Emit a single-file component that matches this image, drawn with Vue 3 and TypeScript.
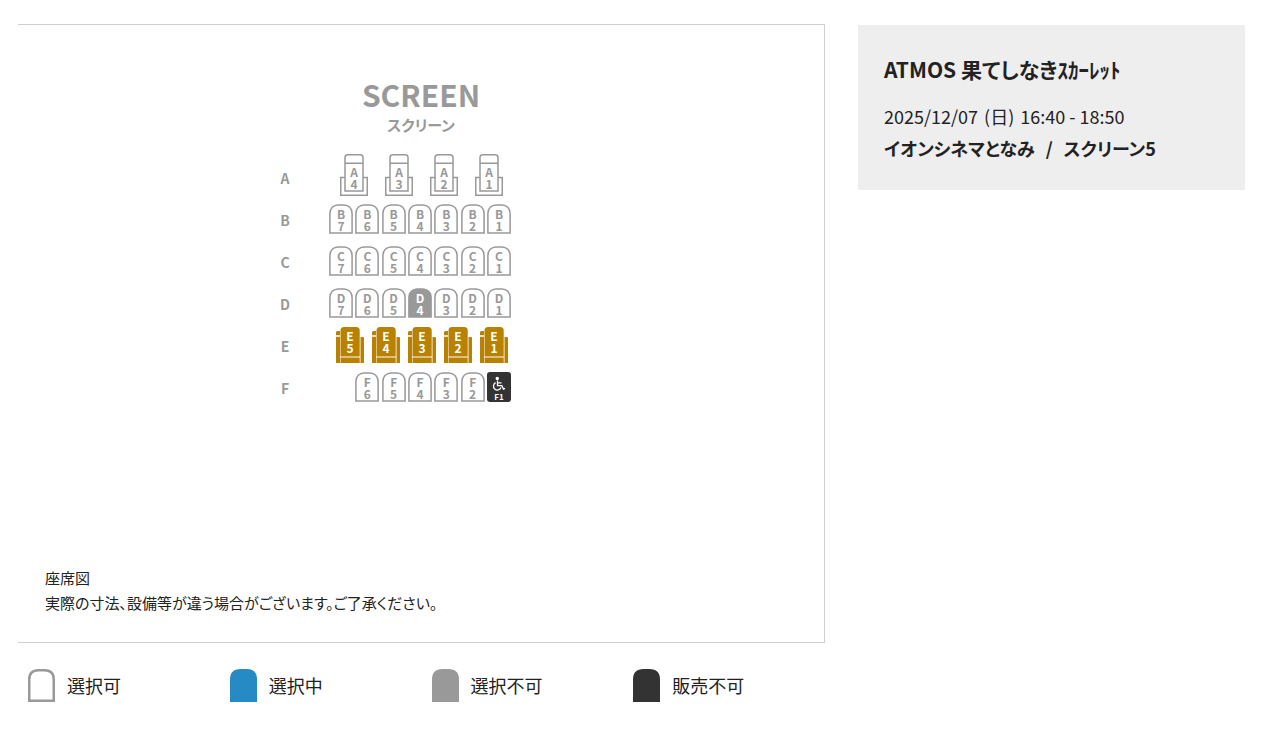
<script setup lang="ts">
type SeatKind = 'standard' | 'wide' | 'premium' | 'wheelchair' | 'gap'
type SeatState = 'available' | 'selected' | 'taken' | 'unsold'

interface Seat {
  row: string
  number: number
  kind: SeatKind
  state: SeatState
}

interface SeatRow {
  name: string
  layout: 'standard' | 'wide' | 'premium'
  seats: Seat[]
}

function makeRow(
  name: string,
  count: number,
  layout: SeatRow['layout'],
  overrides: Record<number, Partial<Seat>> = {},
): SeatRow {
  const seats: Seat[] = []
  for (let number = count; number >= 1; number--) {
    seats.push({ row: name, number, kind: layout, state: 'available', ...overrides[number] })
  }
  return { name, layout, seats }
}

const rows: SeatRow[] = [
  makeRow('A', 4, 'wide'),
  makeRow('B', 7, 'standard'),
  makeRow('C', 7, 'standard'),
  makeRow('D', 7, 'standard', { 4: { state: 'taken' } }),
  makeRow('E', 5, 'premium'),
  makeRow('F', 7, 'standard', {
    7: { kind: 'gap' },
    1: { kind: 'wheelchair', state: 'unsold' },
  }),
]

const legend: { state: SeatState; label: string }[] = [
  { state: 'available', label: '選択可' },
  { state: 'selected', label: '選択中' },
  { state: 'taken', label: '選択不可' },
  { state: 'unsold', label: '販売不可' },
]
</script>

<template>
  <main class="page">
    <div class="main">
      <section class="panel">
        <h1 class="screen">SCREEN</h1>
        <p class="screen-sub">スクリーン</p>

        <div class="map">
          <div v-for="row in rows" :key="row.name" class="row" :class="'row-' + row.layout">
            <span class="row-name">{{ row.name }}</span>
            <div class="seats">
              <template v-for="seat in row.seats" :key="seat.number">
                <span v-if="seat.kind === 'gap'" class="seat"></span>
                <button
                  v-else
                  type="button"
                  class="seat"
                  :class="[seat.kind, seat.state]"
                  :disabled="seat.state === 'taken' || seat.state === 'unsold'"
                >
                  <svg v-if="seat.kind === 'standard'" class="shape" viewBox="0 0 24 30" aria-hidden="true">
                    <path class="body" d="M.9 29.1V9.5C.9 4.5 4.5.9 9 .9h6c4.500 0 8.100 3.600 8.100 8.600v19.600z" />
                  </svg>
                  <svg v-else-if="seat.kind === 'wide'" class="shape" viewBox="0 0 28 42" aria-hidden="true">
                    <path class="body" d="M5 23.500H.75v17.750h26.500V23.500H23" />
                    <path class="body" d="M5 37V3.500Q5 .75 8 .75h12Q23 .75 23 3.500V37zM5 9.300h18" />
                  </svg>
                  <svg v-else-if="seat.kind === 'premium'" class="shape" viewBox="0 0 28 36" aria-hidden="true">
                    <path class="fill" d="M0 8.200V5.500Q0 4 1.500 4H4v4.200zM0 9.700h4V36H0zM24.500 10H27q1 0 1 1v25h-3.500z" />
                    <path class="fill" d="M4.500 29.500V3.500Q4.500 0 8 0h12.200q3.500 0 3.500 3.500v26zM4.500 30.500h19.200V36H4.500z" />
                  </svg>
                  <svg v-else class="shape" viewBox="0 0 24 30" aria-hidden="true">
                    <rect width="24" height="30" rx="3" fill="#333" />
                    <circle cx="10.300" cy="6.500" r="1.700" fill="#fff" />
                    <path
                      d="M10.500 8.500v5.100h4.300l1.700 3.500 1.500-.7M10.500 10.800h4M8.600 10.700a3.900 3.900 0 1 0 5.400 4.900"
                      fill="none"
                      stroke="#fff"
                      stroke-width="1.300"
                    />
                  </svg>
                  <span v-if="seat.kind === 'wheelchair'" class="tag">{{ seat.row }}{{ seat.number }}</span>
                  <span v-else class="code">{{ seat.row }}<br />{{ seat.number }}</span>
                </button>
              </template>
            </div>
          </div>
        </div>

        <p class="note">座席図<br />実際の寸法、設備等が違う場合がございます。ご了承ください。</p>
      </section>

      <ul class="legend">
        <li v-for="item in legend" :key="item.state" class="legend-item">
          <svg class="legend-icon" :class="item.state" viewBox="0 0 27 33" aria-hidden="true">
            <path class="body" d="M1.250 31.750V10.500q0-9.250 9.250-9.250h6q9.250 0 9.250 9.250v21.250z" />
          </svg>
          <span>{{ item.label }}</span>
        </li>
      </ul>
    </div>

    <aside class="info">
      <h2 class="title">ATMOS 果てしなきｽｶｰﾚｯﾄ</h2>
      <p class="date"><span>2025/12/07</span><span>(日)</span><span>16:40 - 18:50</span></p>
      <p class="place"><span>イオンシネマとなみ</span><span>/</span><span>スクリーン5</span></p>
    </aside>
  </main>
</template>

<style>
body {
  background: #fff;
}
</style>

<style scoped>
.page {
  display: grid;
  grid-template-columns: minmax(0, 807fr) minmax(0, 387fr);
  column-gap: 33px;
  align-items: start;
  padding: 24px 35px 24px 18px;
  color: #222;
  font-family: "Noto Sans CJK JP", sans-serif;
  font-feature-settings: "palt";
}

h1,
h2,
p,
ul {
  margin: 0;
  padding: 0;
}

.panel {
  border: 1px solid #d0d0d0;
  border-left: 0;
  padding: 49px 0 27px;
}

.screen {
  color: #999;
  font-size: 30px;
  line-height: 40px;
  font-weight: 700;
  text-align: center;
}

.screen-sub {
  color: #999;
  font-size: 15px;
  line-height: 22px;
  font-weight: 700;
  text-align: center;
}

.map {
  width: 282px;
  margin: 18px auto 0;
}

.row {
  display: flex;
  align-items: center;
  height: 42px;
}

.row-wide {
  height: 44px;
  align-items: flex-start;
}

.row-name {
  width: 10px;
  margin-right: 39px;
  padding-top: 2px;
  color: #999;
  font-size: 14px;
  line-height: 40px;
  font-weight: 700;
  text-align: center;
}

.row-wide .row-name {
  padding-top: 4px;
}

.seats {
  display: flex;
  justify-content: space-between;
  width: 182px;
  box-sizing: border-box;
}

.row-wide .seats {
  padding: 0 8px 0 11px;
}

.row-premium .seats {
  padding: 0 3px 0 7px;
}

.seat {
  position: relative;
  display: flex;
  flex-direction: column;
  align-items: center;
  box-sizing: border-box;
  width: 24px;
  height: 30px;
  margin: 0;
  padding: 4px 0 0;
  border: 0;
  background: none;
  color: #999;
  font-family: inherit;
  font-size: 12px;
  line-height: 12px;
  font-weight: 700;
  text-align: center;
  cursor: pointer;
}

.seat.wide {
  width: 28px;
  height: 42px;
  padding-top: 12px;
}

.seat.premium {
  width: 28px;
  height: 36px;
  padding-top: 3px;
  color: #fff;
}

.seat.taken {
  color: #fff;
}

.seat.wheelchair {
  justify-content: flex-end;
  color: #fff;
}

.shape {
  position: absolute;
  inset: 0;
  width: 100%;
  height: 100%;
}

.code,
.tag {
  position: relative;
}

.tag {
  font-size: 8px;
  line-height: 10px;
}

.body {
  fill: #fff;
  stroke: #999;
  stroke-width: 1.5;
}

.fill {
  fill: #b88100;
}

.taken .body {
  fill: #999;
}

.selected .body {
  fill: #268ac5;
  stroke: #268ac5;
}

.unsold .body {
  fill: #333;
  stroke: #333;
}

.note {
  margin-top: 157px;
  padding: 0 27px;
  font-size: 15px;
  line-height: 25px;
}

.legend {
  display: grid;
  grid-template-columns: repeat(4, 1fr);
  margin-top: 26px;
  list-style: none;
}

.legend-item {
  display: flex;
  align-items: center;
  gap: 12px;
  padding-left: 10px;
  font-size: 18px;
  line-height: 33px;
}

.legend-icon {
  width: 27px;
  height: 33px;
}

.legend-icon .body {
  stroke-width: 2.5;
}

.info {
  margin-top: 1px;
  padding: 27px 26px 26px;
  background: #eee;
}

.title {
  font-size: 21px;
  line-height: 34px;
  font-weight: 700;
}

.date,
.place {
  display: flex;
  font-size: 18px;
  line-height: 32px;
}

.date {
  gap: 6px;
  margin-top: 14px;
}

.place {
  gap: 11px;
  font-weight: 700;
}
</style>
